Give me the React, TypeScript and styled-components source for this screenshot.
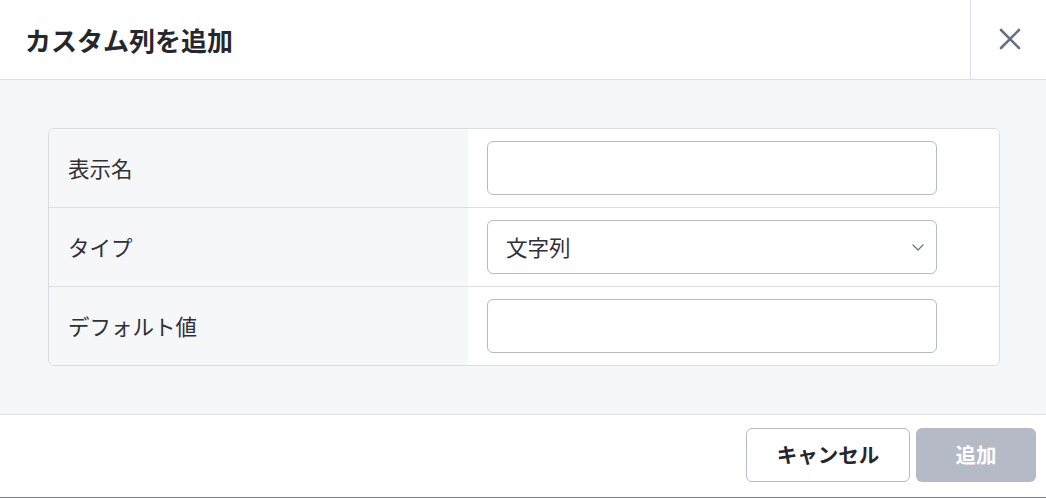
import React from "react";
import styled, { createGlobalStyle } from "styled-components";

const GlobalStyle = createGlobalStyle`
  * { box-sizing: border-box; }
  html, body { margin: 0; padding: 0; background: #ffffff; }
  body {
    font-family: "Noto Sans CJK JP", "Noto Sans", sans-serif;
    color: #2b2d33;
  }
`;

const Dialog = styled.div`
  width: 1046px;
  height: 498px;
  display: flex;
  flex-direction: column;
  background: #ffffff;
  border-bottom: 1px solid #7f818c;
  box-shadow: 0 1px 0 #cfd1d8;
  overflow: hidden;
`;

const Header = styled.header`
  height: 80px;
  display: flex;
  align-items: stretch;
  border-bottom: 1px solid #dcdee5;
  flex-shrink: 0;
`;

const Title = styled.h1`
  flex: 1;
  margin: 0;
  padding-left: 25px;
  display: flex;
  align-items: center;
  font-size: 26px;
  font-weight: 700;
  color: #25272d;
  letter-spacing: 0;
  padding-bottom: 1px;
`;

const CloseButton = styled.button`
  width: 76px;
  border: none;
  border-left: 1px solid #dcdee5;
  background: transparent;
  display: flex;
  align-items: center;
  justify-content: center;
  padding: 0 0 2px 2px;
  color: #6b7080;
  cursor: pointer;
`;

const Body = styled.main`
  height: 335px;
  background: #f6f7f9;
  border-bottom: 1px solid #dcdee5;
  padding: 48px 46px 48px 48px;
  flex-shrink: 0;
`;

const Card = styled.div`
  border: 1px solid #d9dce3;
  border-radius: 6px;
  overflow: hidden;
  background: #ffffff;
`;

const Row = styled.div<{ $last?: boolean }>`
  display: grid;
  grid-template-columns: 419px 1fr;
  height: ${(p) => (p.$last ? "78px" : "79px")};
  border-bottom: ${(p) => (p.$last ? "none" : "1px solid #dcdee5")};
`;

const Label = styled.div`
  background: #f6f7f9;
  display: flex;
  align-items: center;
  padding-left: 19px;
  font-size: 21.5px;
  color: #2e3036;
  padding-bottom: 1px;
`;

const Cell = styled.div`
  background: #ffffff;
  display: flex;
  align-items: center;
  padding-left: 19px;
`;

const Field = styled.div`
  position: relative;
  width: 450px;
  height: 54px;
`;

const TextInput = styled.input`
  width: 100%;
  height: 100%;
  border: 1px solid #b6bac6;
  border-radius: 6px;
  background: #ffffff;
  padding: 0 18px;
  font-family: inherit;
  font-size: 21.5px;
  color: #2e3036;
  outline: none;
`;

const Select = styled.select`
  width: 100%;
  height: 100%;
  appearance: none;
  -webkit-appearance: none;
  border: 1px solid #b6bac6;
  border-radius: 6px;
  background: #ffffff;
  padding: 0 40px 1px 18px;
  font-family: inherit;
  font-size: 21.5px;
  color: #2e3036;
  outline: none;
`;

const Chevron = styled.svg`
  position: absolute;
  right: 13px;
  top: 50%;
  margin-top: -3px;
  pointer-events: none;
`;

const Footer = styled.footer`
  flex: 1;
  display: flex;
  justify-content: flex-end;
  align-items: flex-start;
  gap: 6px;
  padding: 13px 10px 0 0;
`;

const Button = styled.button<{ $primary?: boolean }>`
  height: 54px;
  width: ${(p) => (p.$primary ? "120px" : "164px")};
  border-radius: 6px;
  border: ${(p) => (p.$primary ? "none" : "1px solid #b6bac6")};
  background: ${(p) => (p.$primary ? "#b5bac6" : "#ffffff")};
  color: ${(p) => (p.$primary ? "#ffffff" : "#25272d")};
  font-family: inherit;
  font-size: 20.5px;
  font-weight: 700;
  padding: 0 0 2px;
  cursor: ${(p) => (p.$primary ? "not-allowed" : "pointer")};
`;

export default function App() {
  return (
    <>
      <GlobalStyle />
      <Dialog>
        <Header>
          <Title>カスタム列を追加</Title>
          <CloseButton aria-label="閉じる">
            <svg width="24" height="24" viewBox="0 0 24 24" fill="none">
              <path
                d="M3 3 L21 21 M21 3 L3 21"
                stroke="currentColor"
                strokeWidth="2.6"
                strokeLinecap="round"
              />
            </svg>
          </CloseButton>
        </Header>
        <Body>
          <Card>
            <Row>
              <Label>表示名</Label>
              <Cell>
                <Field>
                  <TextInput type="text" />
                </Field>
              </Cell>
            </Row>
            <Row>
              <Label>タイプ</Label>
              <Cell>
                <Field>
                  <Select defaultValue="string">
                    <option value="string">文字列</option>
                    <option value="number">数値</option>
                    <option value="date">日付</option>
                  </Select>
                  <Chevron width="12" height="7" viewBox="0 0 12 7" fill="none">
                    <path
                      d="M1 1 L6 6 L11 1"
                      stroke="#6b7080"
                      strokeWidth="1.2"
                      strokeLinecap="round"
                      strokeLinejoin="round"
                    />
                  </Chevron>
                </Field>
              </Cell>
            </Row>
            <Row $last>
              <Label>デフォルト値</Label>
              <Cell>
                <Field>
                  <TextInput type="text" />
                </Field>
              </Cell>
            </Row>
          </Card>
        </Body>
        <Footer>
          <Button>キャンセル</Button>
          <Button $primary disabled>
            追加
          </Button>
        </Footer>
      </Dialog>
    </>
  );
}
